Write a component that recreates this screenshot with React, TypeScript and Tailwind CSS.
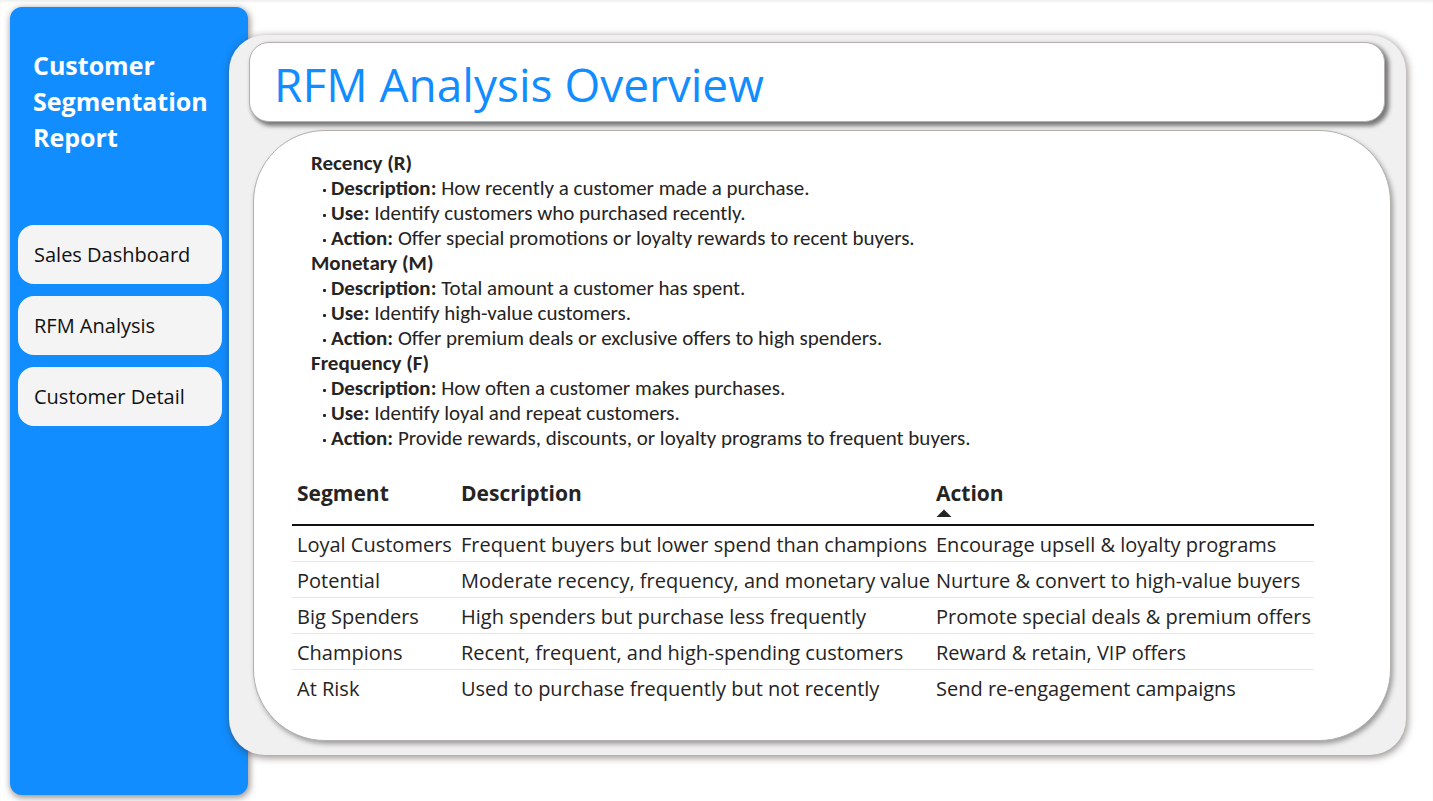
const NAV_ITEMS = ['Sales Dashboard', 'RFM Analysis', 'Customer Detail'];

const METRICS = [
  {
    title: 'Recency (R)',
    points: [
      ['Description:', 'How recently a customer made a purchase.'],
      ['Use:', 'Identify customers who purchased recently.'],
      ['Action:', 'Offer special promotions or loyalty rewards to recent buyers.'],
    ],
  },
  {
    title: 'Monetary (M)',
    points: [
      ['Description:', 'Total amount a customer has spent.'],
      ['Use:', 'Identify high-value customers.'],
      ['Action:', 'Offer premium deals or exclusive offers to high spenders.'],
    ],
  },
  {
    title: 'Frequency (F)',
    points: [
      ['Description:', 'How often a customer makes purchases.'],
      ['Use:', 'Identify loyal and repeat customers.'],
      ['Action:', 'Provide rewards, discounts, or loyalty programs to frequent buyers.'],
    ],
  },
];

const SEGMENTS = [
  ['Loyal Customers', 'Frequent buyers but lower spend than champions', 'Encourage upsell & loyalty programs'],
  ['Potential', 'Moderate recency, frequency, and monetary value', 'Nurture & convert to high-value buyers'],
  ['Big Spenders', 'High spenders but purchase less frequently', 'Promote special deals & premium offers'],
  ['Champions', 'Recent, frequent, and high-spending customers', 'Reward & retain, VIP offers'],
  ['At Risk', 'Used to purchase frequently but not recently', 'Send re-engagement campaigns'],
];

function Sidebar() {
  return (
    <aside className="w-[238px] shrink-0 rounded-xl bg-[#118dff] px-2 pt-10 shadow-[1px_2px_6px_1px_rgba(60,50,45,0.5)]">
      <h2 className="px-[15px] text-[25px] leading-9 font-bold text-white">
        Customer Segmentation Report
      </h2>
      <nav className="mt-[70px] mr-[18px] flex flex-col gap-3">
        {NAV_ITEMS.map((item) => (
          <button
            key={item}
            type="button"
            className="h-[59px] cursor-pointer rounded-2xl bg-[#f4f4f4] px-4 text-left text-[20px] text-[#111111]"
          >
            {item}
          </button>
        ))}
      </nav>
    </aside>
  );
}

function MetricNotes() {
  return (
    <div className="pl-[57px] font-['Carlito','Lato',sans-serif] text-[21px] leading-[25px]">
      {METRICS.map((metric) => (
        <section key={metric.title}>
          <h3 className="font-bold">{metric.title}</h3>
          <ul className="pl-[10px]">
            {metric.points.map(([label, text]) => (
              <li key={label} className="flex items-center">
                <span className="w-[10px] pt-1 pl-[2px]">
                  <span className="block size-[3px] rounded-[1px] bg-[#252423]" />
                </span>
                <span>
                  <strong className="font-bold">{label}</strong> {text}
                </span>
              </li>
            ))}
          </ul>
        </section>
      ))}
    </div>
  );
}

function SegmentTable() {
  return (
    <table className="mt-5 ml-[38px] border-collapse text-left text-[20px] whitespace-nowrap">
      <thead>
        <tr className="h-[54px] border-b-2 border-[#111111] align-top text-[21px] leading-7">
          <th className="w-[164px] pt-2 pl-[5px] font-bold">Segment</th>
          <th className="w-[475px] pt-2 pl-[5px] font-bold">Description</th>
          <th className="w-[383px] pt-2 pl-[5px] font-bold" aria-sort="ascending">
            Action
            <svg className="mt-0.5 block h-2 w-4" viewBox="0 0 16 8" aria-hidden="true">
              <path d="M0.500 8L8 0.500L15.500 8Z" fill="#252423" />
            </svg>
          </th>
        </tr>
      </thead>
      <tbody>
        {SEGMENTS.map((row) => (
          <tr key={row[0]} className="h-9 border-b border-[#e8e8e8] leading-7 last:border-b-0">
            {row.map((cell) => (
              <td key={cell} className="pt-1 pl-[5px]">
                {cell}
              </td>
            ))}
          </tr>
        ))}
      </tbody>
    </table>
  );
}

export default function App() {
  return (
    <div className="flex min-h-screen bg-white pt-[7px] pr-[27px] pb-[6px] pl-[10px] font-['Open_Sans',sans-serif] text-[#252423] shadow-[inset_0_2px_2px_#f1f1f1]">
      <Sidebar />
      <main className="z-10 mt-7 mb-10 -ml-[19px] flex min-w-0 flex-1 flex-col gap-2 rounded-[36px] bg-[#f0f0f0] pt-[7px] pr-[15px] pb-[14px] pl-5 shadow-[1px_2px_7px_1px_rgba(60,50,45,0.5)]">
        <header className="relative z-10 mr-1.5 flex h-20 items-center rounded-[20px] border border-[#b3b0ad] bg-white px-6 pt-1 shadow-[3px_3px_4px_1px_rgba(0,0,0,0.5)]">
          <h1 className="text-[46px] leading-[64px] text-[#118dff]">RFM Analysis Overview</h1>
        </header>
        <div className="ml-1 flex-1 rounded-[72px] border border-[#b3b0ad] bg-white pt-5 shadow-[2px_3px_5px_rgba(0,0,0,0.35)]">
          <MetricNotes />
          <SegmentTable />
        </div>
      </main>
    </div>
  );
}
